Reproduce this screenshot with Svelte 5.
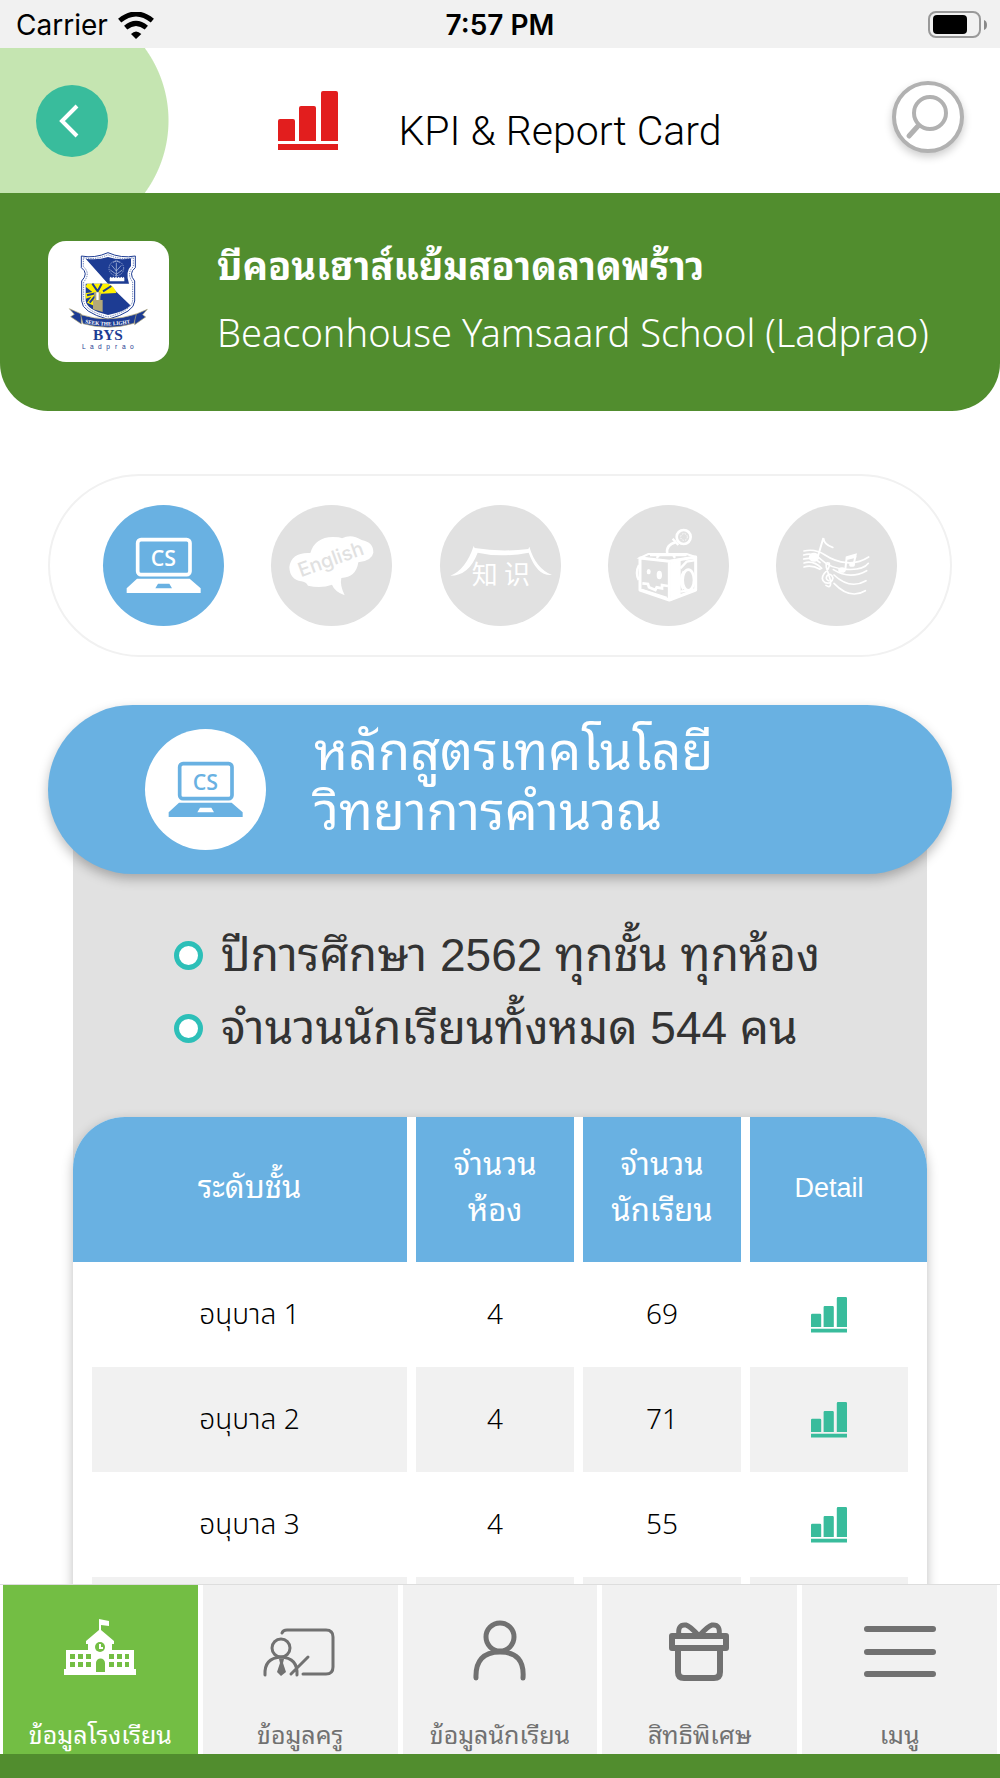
<script>
  const rows = [
    { level: 'อนุบาล 1', rooms: 4, students: 69 },
    { level: 'อนุบาล 2', rooms: 4, students: 71 },
    { level: 'อนุบาล 3', rooms: 4, students: 55 },
    null
  ];
  const subjects = [
    { id: 'cs', name: 'Computer science' },
    { id: 'english', name: 'English' },
    { id: 'chinese', name: 'Chinese' },
    { id: 'robot', name: 'Robotics' },
    { id: 'music', name: 'Music' }
  ];
  const tabs = [
    { id: 'school', label: 'ข้อมูลโรงเรียน' },
    { id: 'teacher', label: 'ข้อมูลครู' },
    { id: 'student', label: 'ข้อมูลนักเรียน' },
    { id: 'gift', label: 'สิทธิพิเศษ' },
    { id: 'menu', label: 'เมนู' }
  ];
  let subject = $state('cs');
  let tab = $state('school');
</script>

{#snippet bars()}
  <svg class="bars" viewBox="0 0 60 60" aria-hidden="true">
    <path d="M0 50V30q0-2 2-2h13q2 0 2 2v20zM21 50V17q0-2 2-2h13q2 0 2 2v33zM43 50V2q0-2 2-2h13q2 0 2 2v48zM0 53h60v6H0z" fill="currentColor" />
  </svg>
{/snippet}

{#snippet laptop()}
  <svg viewBox="189 135 363 363" aria-hidden="true">
    <rect x="293" y="239" width="157" height="105" rx="10" fill="none" stroke="currentColor" stroke-width="11" />
    <path d="M291 356H449L482 385V399H260V385ZM354 371L346 385H396L388 371Z" fill="currentColor" fill-rule="evenodd" />
    <text x="370" y="317" text-anchor="middle" class="cs">CS</text>
  </svg>
{/snippet}

<div class="app">
  <div class="status">
    <span class="carrier">Carrier
      <svg width="36" height="27" viewBox="361 30 108 81" aria-hidden="true">
        <path d="M366 56Q415 16 464 56M384 77Q415 51 446 77" fill="none" stroke="#000" stroke-width="15" />
        <path d="M415 111L400 96Q415 81 431 96Z" />
      </svg>
    </span>
    <strong>7:57 PM</strong>
    <svg class="battery" width="60" height="28" viewBox="0 0 60 28" aria-hidden="true">
      <rect x="1" y="1" width="51" height="25" rx="7" fill="none" stroke="#999" stroke-width="2" />
      <rect x="5" y="4" width="34" height="19" rx="4" />
      <path d="M56 9q3 1 3 5t-3 5z" fill="#888" />
    </svg>
  </div>

  <header>
    <button class="back" aria-label="Back">
      <svg width="72" height="72" viewBox="0 0 72 72"><path d="M41 21L26 36L41 51" fill="none" stroke="#fff" stroke-width="4" /></svg>
    </button>
    <div class="heading">
      {@render bars()}
      <h1>KPI &amp; Report Card</h1>
    </div>
    <button class="search" aria-label="Search">
      <svg width="64" height="64" viewBox="0 0 64 64"><circle cx="34" cy="28" r="16" fill="none" stroke="#b1b1b1" stroke-width="4" /><path d="M22 41L13 51" stroke="#b1b1b1" stroke-width="5" stroke-linecap="round" /></svg>
    </button>
  </header>

  <section class="school">
    <div class="crest">
      <svg viewBox="145 155 363 363" role="img" aria-label="BYS Ladprao">
        <path d="M245 200Q285 208 325 190Q365 208 407 200V235Q385 252 405 275V335Q405 368 325 390Q246 368 246 335V275Q268 252 245 235Z" fill="#fff" stroke="#1d3c93" stroke-width="3" />
        <path d="M251 205Q290 213 325 196Q362 213 401 205V232Q379 252 399 278V333Q396 364 325 383Q254 364 252 333V278Q274 252 251 232Z" fill="none" stroke="#1d3c93" stroke-width="2" stroke-dasharray="4 3" />
        <path d="M258 208Q292 214 325 203Q360 214 394 207V230Q376 247 388 283H325Z" fill="#1d3c93" />
        <path d="M258 283H325L392 348Q380 366 325 377Q260 362 258 333Z" fill="#1d3c93" />
        <path d="M262 283H325Q345 290 350 311L305 313L285 350L262 340L275 322L258 328V312L278 308L258 292Z" fill="#fef100" />
        <path d="M278 283L294 306L306 283M310 306L335 290M262 318L288 312M270 340L288 318" stroke="#1d3c93" stroke-width="6" fill="none" />
        <path d="M283 309H303L302 332H309V368L280 360V332H285Z" fill="#b3a979" />
        <path d="M290 309H297V332H290Z" fill="#fff" />
        <g fill="none" stroke="#c9d3ea" stroke-width="2">
          <path d="M350 262V220M350 245L336 228M350 245L365 228M350 255L332 242M350 255L368 242M341 220Q350 210 360 220" />
          <circle cx="350" cy="237" r="22" stroke-dasharray="4 3" />
        </g>
        <path d="M330 276v-10l3-4 4 4 4-4 4 4 4-4 4 4 4-4 4 4 4-4 4 4 3-4 2 4v10z" fill="#fff" />
        <path d="M209 358L245 374V404L213 382L224 375ZM443 360L405 376V406L438 383L429 376Z" fill="#1d3c93" stroke="#b3a979" stroke-width="2" />
        <path d="M243 376Q325 402 410 374L403 402Q325 425 250 403Z" fill="#1d3c93" stroke="#b3a979" stroke-width="2" />
        <path id="motto" d="M256 401Q325 417 402 399" fill="none" />
        <text class="motto"><textPath href="#motto">SEEK THE LIGHT</textPath></text>
        <text x="325" y="452" text-anchor="middle" class="bys">BYS</text>
        <text x="247 271 295 320 346 367 391" y="480" class="lad">Ladprao</text>
      </svg>
    </div>
    <div class="names">
      <h2>บีคอนเฮาส์แย้มสอาดลาดพร้าว</h2>
      <p>Beaconhouse Yamsaard School (Ladprao)</p>
    </div>
  </section>

  <main>
    <div class="subjects">
      {#each subjects as s}
        <button class="subject" class:active={subject === s.id} aria-label={s.name} onclick={() => (subject = s.id)}>
          {#if s.id === 'cs'}
            {@render laptop()}
          {:else if s.id === 'english'}
            <svg viewBox="694 135 363 363" aria-hidden="true">
              <path d="M812 279Q825 232 880 231Q900 231 907 235Q935 220 966 240Q1002 247 1001 278Q997 302 956 307Q949 353 905 354Q900 375 915 406Q885 395 877 374Q845 386 805 377Q798 365 785 364Q750 358 749 321Q755 276 812 279Z" fill="#fff" />
              <text class="eng" transform="translate(784 352) rotate(-20)">English</text>
            </svg>
          {:else if s.id === 'chinese'}
            <svg viewBox="1198 135 363 363" aria-hidden="true">
              <path d="M1299 258L1302 264Q1380 277 1463 267L1466 260Q1485 325 1534 345Q1490 350 1464 278Q1380 294 1311 278Q1285 347 1229 347Q1275 330 1299 258Z" fill="#fff" />
              <text class="zh" x="1293" y="371">知</text>
              <text class="zh" x="1390" y="371">识</text>
            </svg>
          {:else if s.id === 'robot'}
            <svg viewBox="324 135 363 363" aria-hidden="true" fill="none" stroke="#fff">
              <path d="M420 294L508 304V420L420 390ZM508 304L587 291V390L508 420" stroke-width="9" stroke-linejoin="round" />
              <path d="M420 294L445 282H560L587 291L508 304Z" stroke-width="6" />
              <path d="M513 308L540 302V408L513 420Z" fill="#fff" stroke-width="4" />
              <path d="M541 325L560 305L587 300M541 395L585 388M450 285H560M470 294L480 283M525 294L518 283" stroke-width="7" />
              <ellipse cx="565" cy="360" rx="17" ry="31" stroke-width="8" />
              <path d="M552 334Q535 360 550 388" stroke-width="8" />
              <path d="M417 315Q405 338 416 360" stroke-width="7" />
              <path d="M427 370L444 372L447 382L466 390L470 382L486 385V375L504 378M425 390L500 414" stroke-width="8" />
              <ellipse cx="446" cy="335" rx="6" ry="8" fill="#fff" stroke="none" />
              <ellipse cx="478" cy="345" rx="8" ry="13" fill="#fff" stroke="none" />
              <path d="M502 283Q495 255 529 246M518 236L535 255" stroke-width="7" />
              <circle cx="551" cy="231" r="21" stroke-width="8" />
              <circle cx="552" cy="231" r="10" stroke-width="3" stroke-dasharray="4 4" />
            </svg>
          {:else}
            <svg viewBox="828 135 363 363" aria-hidden="true" fill="none" stroke="#fff" stroke-width="5" stroke-linecap="round">
              <path d="M912 273Q945 265 975 285T1040 308T1106 291M911 285Q940 275 965 300T1040 328T1105 310M911 297Q940 290 960 308M912 309Q940 300 965 325M912 321Q935 313 960 328M1000 329Q1050 360 1100 332M1002 345Q1050 390 1098 362M1002 370Q1050 420 1096 392" />
              <path d="M952 295L970 234Q972 254 998 262" stroke-width="6" />
              <ellipse cx="942" cy="292" rx="13" ry="11" fill="#fff" />
              <path d="M1036 328L1040 292L1067 284L1061 314M1040 297L1067 290" stroke-width="6" />
              <ellipse cx="1026" cy="330" rx="9" ry="6" fill="#fff" /><ellipse cx="1056" cy="314" rx="6" ry="4" fill="#fff" />
              <path d="M978 376Q995 388 991 360L979 322Q976 304 988 310Q990 325 973 340Q960 358 975 368Q995 374 999 354Q994 338 982 346Q974 358 986 362" />
            </svg>
          {/if}
        </button>
      {/each}
    </div>

    <div class="course">
      <span class="disc">{@render laptop()}</span>
      <h2>หลักสูตรเทคโนโลยี<br />วิทยาการคำนวณ</h2>
    </div>

    <div class="panel">
      <ul>
        <li>ปีการศึกษา 2562 ทุกชั้น ทุกห้อง</li>
        <li>จำนวนนักเรียนทั้งหมด 544 คน</li>
      </ul>
      <table>
        <colgroup><col /><col class="count" /><col class="count" /><col class="more" /></colgroup>
        <thead>
          <tr>
            <th scope="col">ระดับชั้น</th>
            <th scope="col">จำนวน<br />ห้อง</th>
            <th scope="col">จำนวน<br />นักเรียน</th>
            <th scope="col">Detail</th>
          </tr>
        </thead>
        <tbody>
          {#each rows as row}
            <tr>
              {#if row}
                <td>{row.level}</td>
                <td>{row.rooms}</td>
                <td>{row.students}</td>
                <td><button class="detail" aria-label={`Detail ${row.level}`}>{@render bars()}</button></td>
              {:else}
                <td></td><td></td><td></td><td></td>
              {/if}
            </tr>
          {/each}
        </tbody>
      </table>
    </div>
  </main>

  <nav>
    {#each tabs as t}
      <button class="tab" class:current={tab === t.id} onclick={() => (tab = t.id)}>
        <svg width="80" height="64" viewBox="0 0 80 64" aria-hidden="true" fill="none" stroke="currentColor" stroke-linecap="round" stroke-linejoin="round">
          {#if t.id === 'school'}
            <g fill="currentColor" stroke="none">
              <path d="M39 1L49 3V8L41 7V12L54 23V26H52V32H74V51H76V57H4V51H6V32H28V26H26V23L39 12Z" />
              <g fill="#73be44">
                <circle cx="40" cy="29" r="5" />
                <path d="M36 54V45a4 4 0 0 1 9 0V54zM10 36h5v5h-5zM18 36h5v5h-5zM26 36h5v5h-5zM49 36h5v5h-5zM57 36h5v5h-5zM65 36h4v5h-4zM10 44h5v5h-5zM18 44h5v5h-5zM26 44h5v5h-5zM49 44h5v5h-5zM57 44h5v5h-5zM65 44h4v5h-4z" />
              </g>
              <path d="M39 26h2v3h2v2h-4z" />
            </g>
          {:else if t.id === 'teacher'}
            <path d="M22 15Q23 12 27 12H66Q73 12 73 19V49Q73 56 66 56H43" stroke-width="3" />
            <circle cx="21" cy="30" r="9" stroke-width="3" />
            <path d="M5 57Q4 40 21 39Q38 40 37 57M31 56L48 39" stroke-width="3" />
            <path d="M19 41h5l-1 4 3 9-5 4-4-4 3-9z" fill="currentColor" stroke="none" />
          {:else if t.id === 'student'}
            <circle cx="40" cy="19" r="14" stroke-width="5" />
            <path d="M16 60Q15 34 40 34Q65 34 63 60" stroke-width="5" />
          {:else if t.id === 'gift'}
            <g stroke-width="6">
              <path d="M12 18H66V30H12ZM18 31V54Q18 60 24 60H54Q60 60 60 54V31" />
              <path d="M19 18Q17 6 26 7Q30 8 39 18Q48 8 52 7Q61 6 59 18" stroke-width="5" />
            </g>
          {:else}
            <path d="M7 11H73M7 34H73M7 56H73" stroke-width="6" />
          {/if}
        </svg>
        <span>{t.label}</span>
      </button>
    {/each}
  </nav>
</div>

<style>
  :global(body) { margin: 0; background: #fff; }
  * { box-sizing: border-box; }
  h1, h2, p, ul { margin: 0; padding: 0; font-weight: 400; }
  button { padding: 0; border: 0; background: none; color: inherit; font: inherit; cursor: pointer; }
  svg { display: block; flex: none; }

  .app {
    display: flex;
    flex-direction: column;
    height: 100vh;
    overflow: hidden;
    font-family: 'Liberation Sans', 'Noto Sans Thai Looped', Loma, 'Noto Sans Thai', sans-serif;
    color: #000;
  }

  .status {
    display: grid;
    grid-template-columns: 1fr auto 1fr;
    align-items: center;
    height: 48px;
    padding: 2px 12px 0;
    background: #f1f1f1;
    font: 28px/32px Inter, sans-serif;
    flex: none;
  }
  .status strong { font-weight: 600; }
  .carrier { display: flex; align-items: center; gap: 10px; padding-left: 4px; }
  .battery { justify-self: end; }

  header {
    display: flex;
    align-items: center;
    justify-content: space-between;
    flex: none;
    height: 145px;
    padding: 0 36px;
    background: radial-gradient(circle at 46px 50%, #c5e5b1 122px, #fff 123px);
  }
  .back { border-radius: 50%; background: #39bc9c; }
  .heading { display: flex; align-items: center; gap: 60px; color: #e21e1e; }
  .heading .bars { width: 60px; height: 60px; }
  h1 { padding-top: 20px; font: 300 41px/48px Roboto, sans-serif; color: #000; }
  .search { margin-bottom: 8px; border: 4px solid #b1b1b1; border-radius: 50%; background: #fff; box-shadow: 0 4px 8px #0003; }

  .school {
    display: flex;
    gap: 48px;
    flex: none;
    min-height: 218px;
    padding: 48px;
    border-radius: 0 0 48px 48px;
    background: #518d2e;
    color: #fff;
  }
  .crest { flex: none; width: 121px; height: 121px; border-radius: 18px; background: #fff; }
  .bys { font: 700 46px 'Liberation Serif', serif; fill: #1d3c93; }
  .lad { font: 20px 'Liberation Sans', sans-serif; fill: #1d3c93; }
  .motto { font: 700 16px 'Liberation Serif', serif; fill: #fff; }
  .names h2 { font-size: 38px; line-height: 52px; font-weight: 700; }
  .names p { margin-top: 8px; font: 300 38px/62px 'Noto Sans', sans-serif; white-space: nowrap; }

  main { flex: 1; min-height: 0; overflow-y: auto; scrollbar-width: none; padding: 63px 48px 0; }
  .subjects {
    display: flex;
    justify-content: space-between;
    align-items: center;
    height: 183px;
    padding: 0 53px;
    border: 2px solid #f1f1f1;
    border-radius: 92px;
  }
  .subject, .disc { flex: none; width: 121px; height: 121px; border-radius: 50%; background: #e1e1e1; color: #fff; }
  .subject.active { background: #69b1e2; }
  .cs { font: 600 64px 'Open Sans', sans-serif; fill: currentColor; }
  .eng { font: 500 59px Inter, sans-serif; fill: #e1e1e1; }
  .zh { font: 400 78px 'Noto Sans CJK SC', sans-serif; fill: #fff; }

  .course {
    position: relative;
    display: flex;
    align-items: center;
    gap: 48px;
    height: 169px;
    margin-top: 48px;
    padding: 0 97px;
    border-radius: 85px;
    background: #69b1e2;
    box-shadow: 0 5px 12px #0004;
    color: #fff;
  }
  .disc { background: #fff; color: #69b1e2; }
  .course h2 { font-size: 52px; line-height: 60px; padding-bottom: 16px; }

  .panel { margin: -85px 25px 0; padding-top: 105px; background: linear-gradient(#e1e1e1 440px, #fff 440px); }
  ul { padding: 25px 0 52px 101px; list-style: none; color: #333; }
  li { display: flex; align-items: center; gap: 18px; font-size: 46px; line-height: 73px; }
  li::before { content: ''; width: 19px; height: 19px; border: 5px solid #2dbfb8; border-radius: 50%; background: #fff; }

  table {
    width: 100%;
    border-spacing: 0;
    table-layout: fixed;
    border-radius: 52px 52px 0 0;
    overflow: hidden;
    background: #fff;
    box-shadow: 0 4px 12px #0004;
    text-align: center;
  }
  .count { width: 167px; }
  .more { width: 177px; }
  th, td { padding: 0 0 4px; border-right: 9px solid #fff; }
  th { height: 145px; background: #69b1e2; background-clip: padding-box; color: #fff; font-weight: 400; font-size: 31px; line-height: 46px; }
  th:first-child { padding-left: 19px; }
  th:last-child { padding-right: 19px; border-right: 0; font-size: 27px; }
  td { height: 105px; font: 300 28px/40px 'Noto Sans', 'Noto Sans Thai', sans-serif; }
  td:first-child { border-left: 19px solid #fff; }
  td:last-child { padding: 0; border-right: 19px solid #fff; }
  tbody tr:nth-child(even) td { background: #f1f1f1; background-clip: padding-box; }
  .detail { display: block; margin: 0 auto; color: #39bc9c; }
  .detail .bars { width: 36px; height: 36px; }

  nav {
    display: grid;
    grid-template-columns: repeat(5, 1fr);
    gap: 5px;
    flex: none;
    padding: 0 3px;
    border-top: 1px solid #ddd;
    border-bottom: 24px solid #518d2e;
    background: #fff;
  }
  .tab {
    display: flex;
    flex-direction: column;
    align-items: center;
    justify-content: space-between;
    height: 169px;
    padding-top: 33px;
    background: #f1f1f1;
    color: #717171;
    font-size: 25px;
    line-height: 38px;
    white-space: nowrap;
  }
  .tab.current { background: #73be44; color: #fff; }
</style>
